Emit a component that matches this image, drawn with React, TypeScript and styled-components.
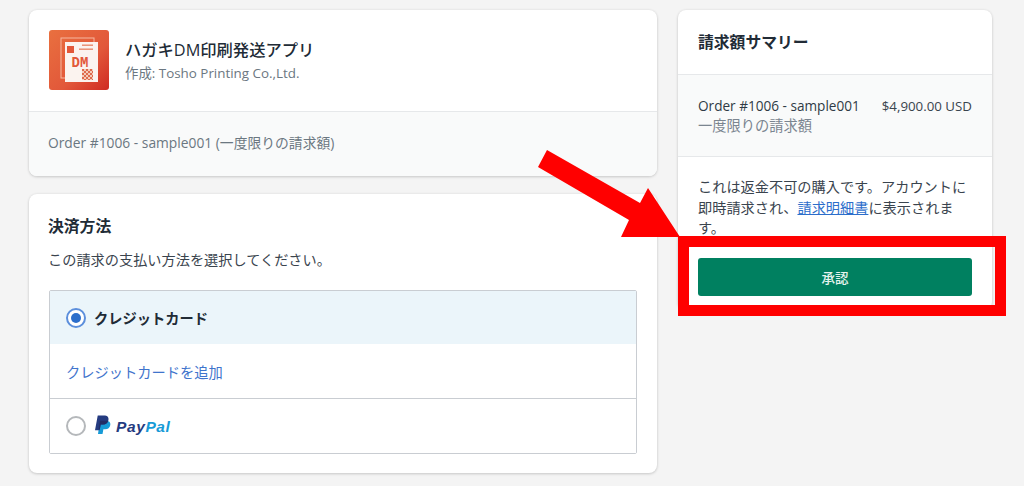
import styled, { createGlobalStyle } from 'styled-components';

const GlobalStyle = createGlobalStyle`
	html, body {
		margin: 0;
		padding: 0;
		background: #f4f4f4;
		font-family: 'Open Sans', 'Noto Sans CJK JP', sans-serif;
		color: #212b36;
	}
`;

function AppIcon() {
	return (
		<svg width="60" height="60" viewBox="0 0 60 60">
			<defs>
				<linearGradient id="iconBg" x1="0" y1="0" x2="1" y2="1">
					<stop offset="0" stopColor="#e9703f" />
					<stop offset="0.6" stopColor="#e2583a" />
					<stop offset="1" stopColor="#cf2a22" />
				</linearGradient>
				<pattern id="qr" width="4" height="4" patternUnits="userSpaceOnUse" x="33" y="39">
					<rect width="4" height="4" fill="#f3cbbb" />
					<rect width="2" height="2" fill="#df6a4c" />
					<rect x="2" y="2" width="2" height="2" fill="#df6a4c" />
				</pattern>
			</defs>
			<rect width="60" height="60" rx="3" fill="url(#iconBg)" />
			<rect x="12" y="8" width="33" height="40" fill="none" stroke="#f6b7a0" strokeWidth="1" />
			<rect x="16" y="12" width="33" height="40" fill="#fbf3ef" />
			<rect x="18" y="16" width="7" height="7" fill="#e2583a" />
			<rect x="33" y="14.500" width="11" height="1.400" fill="#e88a6c" />
			<rect x="30" y="18.500" width="14" height="1.400" fill="#e88a6c" />
			<text x="31" y="37" textAnchor="middle" fontFamily="'Liberation Mono', monospace" fontWeight="700" fontSize="14" fill="#e2583a">
				DM
			</text>
			<rect x="33" y="39" width="11" height="11" fill="url(#qr)" />
		</svg>
	);
}

function PayPalMark() {
	return (
		<svg width="16" height="20" viewBox="0 0 17 20">
			<path
				d="M5.200 5.600h6.600c2.900 0 4.900 1.400 4.500 4.300-.5 3-2.700 4.500-5.500 4.500H8.900l-.9 5.100H3.200z"
				fill="#179bd7"
			/>
			<path
				d="M2.900 0h6.700c3.200 0 5.200 1.500 4.700 4.600-.5 3.300-3 5-6 5H6l-1 5.900H0z"
				fill="#253b80"
			/>
			<path d="M5.200 5.600h8.900c-.6 2.600-3 4-5.800 4H6l-.9 5.100H3.900z" fill="#222d65" />
		</svg>
	);
}

function App() {
	return (
		<>
			<GlobalStyle />
			<Page>
				<MainColumn>
					<Card>
						<AppHeader>
							<AppIcon />
							<AppInfo>
								<AppTitle>ハガキDM印刷発送アプリ</AppTitle>
								<AppAuthor>作成: Tosho Printing Co.,Ltd.</AppAuthor>
							</AppInfo>
						</AppHeader>
						<OrderBar>Order #1006 - sample001 (一度限りの請求額)</OrderBar>
					</Card>
					<PaymentCard>
						<SectionTitle>決済方法</SectionTitle>
						<PaymentHint>この請求の支払い方法を選択してください。</PaymentHint>
						<OptionBox>
							<OptionRow $selected>
								<Radio $checked />
								<OptionLabel>クレジットカード</OptionLabel>
							</OptionRow>
							<AddCardRow>
								<AddCardLink>クレジットカードを追加</AddCardLink>
							</AddCardRow>
							<OptionRow>
								<Radio />
								<PayPalLogo>
									<PayPalMark />
									<PayPalWord>
										Pay<span>Pal</span>
									</PayPalWord>
								</PayPalLogo>
							</OptionRow>
						</OptionBox>
					</PaymentCard>
				</MainColumn>
				<SummaryCard>
					<SummaryHeader>
						<SectionTitle>請求額サマリー</SectionTitle>
					</SummaryHeader>
					<SummaryOrder>
						<div>
							<OrderName>Order #1006 - sample001</OrderName>
							<OrderType>一度限りの請求額</OrderType>
						</div>
						<OrderPrice>$4,900.00 USD</OrderPrice>
					</SummaryOrder>
					<SummaryBody>
						<Notice>
							これは返金不可の購入です。アカウントに即時請求され、<NoticeLink>請求明細書</NoticeLink>に表示されます。
						</Notice>
						<ApproveButton>承認</ApproveButton>
					</SummaryBody>
				</SummaryCard>
				<Arrow viewBox="0 0 144 88" width="144" height="88">
					<polygon points="9,0 0,17 91,70 83,87 142,87 110,38 102,53" fill="#ff0000" />
				</Arrow>
				<HighlightFrame />
			</Page>
		</>
	);
}

export default App;

const Page = styled.div`
	position: relative;
	width: 1024px;
	height: 486px;
	box-sizing: border-box;
	padding: 10px 0 0 29px;
	display: flex;
	align-items: flex-start;
	gap: 21px;
	overflow: hidden;
`;

const MainColumn = styled.div`
	width: 628px;
	display: flex;
	flex-flow: column nowrap;
	gap: 18px;
`;

const Card = styled.section`
	background: #fff;
	border-radius: 8px;
	box-shadow: 0 0 3px rgba(23, 24, 24, 0.06), 0 1px 3px rgba(0, 0, 0, 0.16);
	overflow: hidden;
`;

const AppHeader = styled.div`
	height: 102px;
	box-sizing: border-box;
	padding: 20px 20px 0;
	display: flex;
	gap: 16px;
	align-items: flex-start;
	border-bottom: 1px solid #e6e8ea;
`;

const AppInfo = styled.div`
	display: flex;
	flex-flow: column nowrap;
	padding-top: 8px;
`;

const AppTitle = styled.div`
	font-size: 16.300px;
	font-weight: 500;
	line-height: 24px;
	color: #212b36;
`;

const AppAuthor = styled.div`
	font-size: 13.400px;
	line-height: 22px;
	color: #6b7781;
`;

const OrderBar = styled.div`
	height: 64px;
	box-sizing: border-box;
	padding: 0 19px 5px;
	display: flex;
	align-items: center;
	font-size: 13.800px;
	color: #6b7781;
	background: #f9fafa;
`;

const PaymentCard = styled(Card)`
	height: 279px;
	box-sizing: border-box;
	padding: 21px 20px 0;
`;

const SectionTitle = styled.h2`
	margin: 0 0 0 -1px;
	font-size: 15.800px;
	font-weight: 600;
	line-height: 22px;
	color: #212b36;
`;

const PaymentHint = styled.p`
	margin: 13px 0 0 -1px;
	font-size: 14.200px;
	line-height: 20px;
	color: #3a444e;
`;

const OptionBox = styled.div`
	margin-top: 20px;
	border: 1px solid #c9cdd2;
	border-radius: 2px;
`;

const OptionRow = styled.div<{ $selected?: boolean }>`
	height: ${({ $selected }) => ($selected ? '53px' : '54px')};
	box-sizing: border-box;
	padding: 0 16px;
	display: flex;
	align-items: center;
	gap: 8px;
	background: ${({ $selected }) => ($selected ? '#ebf5fa' : '#fff')};
`;

const Radio = styled.span<{ $checked?: boolean }>`
	width: 20px;
	height: 20px;
	box-sizing: border-box;
	flex: none;
	border-radius: 50%;
	border: 2px solid ${({ $checked }) => ($checked ? '#5c8fdc' : '#b5b8bb')};
	background: #fff;
	display: flex;
	align-items: center;
	justify-content: center;

	&::after {
		content: '';
		display: ${({ $checked }) => ($checked ? 'block' : 'none')};
		width: 10px;
		height: 10px;
		border-radius: 50%;
		background: #2c6ecb;
	}
`;

const OptionLabel = styled.span`
	font-size: 14.250px;
	font-weight: 600;
	color: #212b36;
`;

const AddCardRow = styled.div`
	height: 55px;
	box-sizing: border-box;
	padding: 0 16px;
	display: flex;
	align-items: center;
	border-bottom: 1px solid #c9cdd2;
`;

const AddCardLink = styled.a`
	font-size: 14.250px;
	color: #3f74cc;
`;

const PayPalLogo = styled.span`
	display: flex;
	align-items: center;
	gap: 5px;
	margin: -2px 0 0 1px;
`;

const PayPalWord = styled.span`
	font-family: 'Liberation Sans', sans-serif;
	font-size: 15.500px;
	font-style: italic;
	font-weight: 700;
	letter-spacing: 0.600px;
	color: #253b80;
	padding-top: 3px;

	span {
		color: #179bd7;
	}
`;

const SummaryCard = styled(Card)`
	width: 314px;
	height: 300px;
`;

const SummaryHeader = styled.div`
	height: 65px;
	box-sizing: border-box;
	padding: 21px 21px 0;
	border-bottom: 1px solid #e6e8ea;
`;

const SummaryOrder = styled.div`
	height: 82px;
	box-sizing: border-box;
	padding: 21px 20px 0;
	display: flex;
	justify-content: space-between;
	align-items: flex-start;
	background: #f9fafa;
	border-bottom: 1px solid #e6e8ea;
`;

const OrderName = styled.div`
	font-size: 13.600px;
	font-weight: 500;
	line-height: 20px;
	color: #2f3a45;
`;

const OrderType = styled.div`
	font-size: 14.250px;
	line-height: 20px;
	color: #7b8590;
`;

const OrderPrice = styled.div`
	font-size: 13.300px;
	line-height: 20px;
	color: #3a444e;
`;

const SummaryBody = styled.div`
	padding: 20px 20px 0;
`;

const Notice = styled.p`
	margin: 0;
	font-size: 14.200px;
	line-height: 20.500px;
	color: #3a444e;
`;

const NoticeLink = styled.a`
	color: #2c6ecb;
	text-decoration: underline;
`;

const ApproveButton = styled.button`
	display: block;
	width: 274px;
	height: 38px;
	margin-top: 19px;
	border: none;
	border-radius: 3px;
	background: #008060;
	color: #e6f4ef;
	font-family: inherit;
	font-size: 13.500px;
	font-weight: 500;
`;

const Arrow = styled.svg`
	position: absolute;
	left: 538px;
	top: 150px;
`;

const HighlightFrame = styled.div`
	position: absolute;
	left: 678px;
	top: 236px;
	width: 328px;
	height: 80px;
	box-sizing: border-box;
	border: 11px solid #ff0000;
`;
